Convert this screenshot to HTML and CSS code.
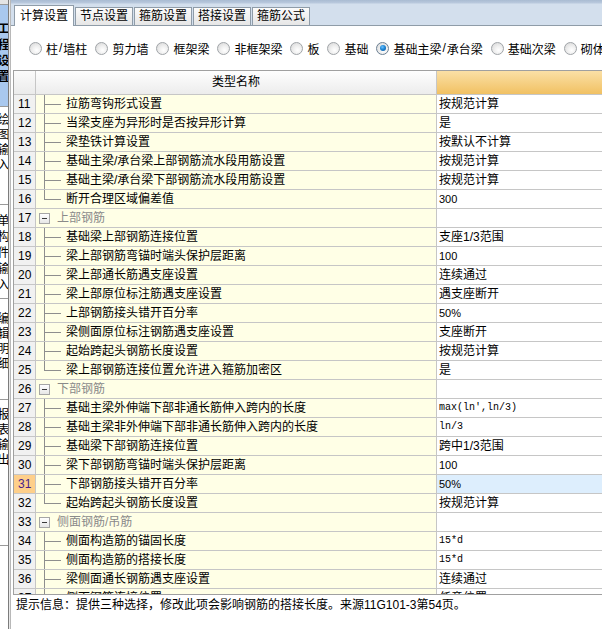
FILE: index.html
```html
<!DOCTYPE html>
<html lang="zh-CN">
<head>
<meta charset="utf-8">
<title>计算设置</title>
<link rel="stylesheet" href="styles.css">
</head>
<body>
<div class="app">
  <div class="sidebar">
    <div class="stab top"></div>
    <div class="stab active"><span>工程设置</span></div>
    <div class="stab t2"><span>绘图输入</span></div>
    <div class="stab t3"><span>单构件输入</span></div>
    <div class="stab t4"><span>编辑明细</span></div>
    <div class="stab t5"><span>报表输出</span></div>
    <div class="stab rest"></div>
  </div>
  <div class="gap"></div>
  <div class="main">
    <div class="tabbar">
      <div class="tab on">计算设置</div>
      <div class="tab">节点设置</div>
      <div class="tab">箍筋设置</div>
      <div class="tab">搭接设置</div>
      <div class="tab">箍筋公式</div>
    </div>
    <div class="radios">
      <label class="opt"><span class="radio"></span>柱<span class="sl">/</span>墙柱</label>
      <label class="opt"><span class="radio"></span>剪力墙</label>
      <label class="opt"><span class="radio"></span>框架梁</label>
      <label class="opt"><span class="radio"></span>非框架梁</label>
      <label class="opt"><span class="radio"></span>板</label>
      <label class="opt"><span class="radio"></span>基础</label>
      <label class="opt"><span class="radio checked"></span>基础主梁<span class="sl">/</span>承台梁</label>
      <label class="opt"><span class="radio"></span>基础次梁</label>
      <label class="opt"><span class="radio"></span>砌体结构</label>
    </div>
    <div class="grid">
      <div class="row hdr"><div class="num"></div><div class="name">类型名称</div><div class="val"></div></div>
      <div class="row"><div class="num">11</div><div class="name"><span class="tree"></span>拉筋弯钩形式设置</div><div class="val">按规范计算</div></div>
      <div class="row"><div class="num">12</div><div class="name"><span class="tree"></span>当梁支座为异形时是否按异形计算</div><div class="val">是</div></div>
      <div class="row"><div class="num">13</div><div class="name"><span class="tree"></span>梁垫铁计算设置</div><div class="val">按默认不计算</div></div>
      <div class="row"><div class="num">14</div><div class="name"><span class="tree"></span>基础主梁/承台梁上部钢筋流水段用筋设置</div><div class="val">按规范计算</div></div>
      <div class="row"><div class="num">15</div><div class="name"><span class="tree"></span>基础主梁/承台梁下部钢筋流水段用筋设置</div><div class="val">按规范计算</div></div>
      <div class="row"><div class="num">16</div><div class="name"><span class="tree last"></span>断开合理区域偏差值</div><div class="val n">300</div></div>
      <div class="row group"><div class="num">17</div><div class="name"><span class="box"></span>上部钢筋</div><div class="val"></div></div>
      <div class="row"><div class="num">18</div><div class="name"><span class="tree"></span>基础梁上部钢筋连接位置</div><div class="val">支座1/3范围</div></div>
      <div class="row"><div class="num">19</div><div class="name"><span class="tree"></span>梁上部钢筋弯锚时端头保护层距离</div><div class="val n">100</div></div>
      <div class="row"><div class="num">20</div><div class="name"><span class="tree"></span>梁上部通长筋遇支座设置</div><div class="val">连续通过</div></div>
      <div class="row"><div class="num">21</div><div class="name"><span class="tree"></span>梁上部原位标注筋遇支座设置</div><div class="val">遇支座断开</div></div>
      <div class="row"><div class="num">22</div><div class="name"><span class="tree"></span>上部钢筋接头错开百分率</div><div class="val n">50%</div></div>
      <div class="row"><div class="num">23</div><div class="name"><span class="tree"></span>梁侧面原位标注钢筋遇支座设置</div><div class="val">支座断开</div></div>
      <div class="row"><div class="num">24</div><div class="name"><span class="tree"></span>起始跨起头钢筋长度设置</div><div class="val">按规范计算</div></div>
      <div class="row"><div class="num">25</div><div class="name"><span class="tree last"></span>梁上部钢筋连接位置允许进入箍筋加密区</div><div class="val">是</div></div>
      <div class="row group"><div class="num">26</div><div class="name"><span class="box"></span>下部钢筋</div><div class="val"></div></div>
      <div class="row"><div class="num">27</div><div class="name"><span class="tree"></span>基础主梁外伸端下部非通长筋伸入跨内的长度</div><div class="val m">max(ln',ln/3)</div></div>
      <div class="row"><div class="num">28</div><div class="name"><span class="tree"></span>基础主梁非外伸端下部非通长筋伸入跨内的长度</div><div class="val m">ln/3</div></div>
      <div class="row"><div class="num">29</div><div class="name"><span class="tree"></span>基础梁下部钢筋连接位置</div><div class="val">跨中1/3范围</div></div>
      <div class="row"><div class="num">30</div><div class="name"><span class="tree"></span>梁下部钢筋弯锚时端头保护层距离</div><div class="val n">100</div></div>
      <div class="row sel"><div class="num">31</div><div class="name"><span class="tree"></span>下部钢筋接头错开百分率</div><div class="val n">50%</div></div>
      <div class="row"><div class="num">32</div><div class="name"><span class="tree last"></span>起始跨起头钢筋长度设置</div><div class="val">按规范计算</div></div>
      <div class="row group"><div class="num">33</div><div class="name"><span class="box"></span>侧面钢筋/吊筋</div><div class="val"></div></div>
      <div class="row"><div class="num">34</div><div class="name"><span class="tree"></span>侧面构造筋的锚固长度</div><div class="val m">15*d</div></div>
      <div class="row"><div class="num">35</div><div class="name"><span class="tree"></span>侧面构造筋的搭接长度</div><div class="val m">15*d</div></div>
      <div class="row"><div class="num">36</div><div class="name"><span class="tree"></span>梁侧面通长钢筋遇支座设置</div><div class="val">连续通过</div></div>
      <div class="row"><div class="num">37</div><div class="name"><span class="tree"></span>侧面钢筋连接位置</div><div class="val">任意位置</div></div>
    </div>
    <div class="status">提示信息：提供三种选择，修改此项会影响钢筋的搭接长度。来源11G101-3第54页。</div>
  </div>
</div>
</body>
</html>
```
FILE: styles.css
```css
html, body {
  margin: 0;
  padding: 0;
  background: #ffffff;
}
body {
  width: 602px;
  height: 629px;
  overflow: hidden;
  font-family: "Liberation Sans", "Noto Sans CJK SC", sans-serif;
  font-size: 12px;
  color: #000;
}
.app {
  display: flex;
  height: 629px;
}

/* left vertical tabs */
.sidebar {
  width: 8px;
  border-right: 1px solid #7c7c7c;
  display: flex;
  flex-direction: column;
  overflow: hidden;
  background: #f4f4f4;
}
.stab {
  flex: none;
  overflow: hidden;
  border-top: 1px solid #9a9a9a;
  background: #ffffff;
}
.stab span {
  display: block;
  writing-mode: vertical-rl;
  letter-spacing: 3px;
  margin-left: -5px;
  width: 13px;
  line-height: 13px;
}
.stab.top { height: 4px; border-top: none; background: #e4e4e4; }
.stab.active { height: 102px; background: #a9c8ee; padding-top: 17px; box-sizing: border-box; font-weight: bold; }
.stab.active span { letter-spacing: 4px; }
.stab.t2 { height: 98px; padding-top: 6px; box-sizing: border-box; }
.stab.t3 { height: 94px; padding-top: 9px; box-sizing: border-box; }
.stab.t3 span { letter-spacing: 4px; }
.stab.t4 { height: 101px; padding-top: 13px; box-sizing: border-box; }
.stab.t5 { height: 146px; padding-top: 8px; box-sizing: border-box; }
.stab.rest { flex: 1; }

.gap {
  width: 1px;
  background: #e8e8e8;
}
.main {
  flex: 1;
  min-width: 0;
  border-left: 1px solid #b8b8b8;
  display: flex;
  flex-direction: column;
}

/* top tab strip */
.tabbar {
  height: 25px;
  border-bottom: 1px solid #8f9ca8;
  background: linear-gradient(#a9bbd2 0, #b9c9dd 3px, #d3dfed 4px, #d3dfed 100%);
  display: flex;
  align-items: flex-end;
  gap: 1px;
  padding-left: 3px;
  white-space: nowrap;
}
.tab {
  height: 17px;
  line-height: 17px;
  padding: 0 4px;
  border: 1px solid #8f9ca8;
  border-bottom: none;
  background: linear-gradient(#fbfbfb, #e6e6e6);
}
.tab.on {
  height: 20px;
  line-height: 20px;
  padding: 0 5px;
  margin-bottom: -1px;
  background: #ffffff;
}

/* radio row */
.radios {
  height: 44px;
  display: flex;
  align-items: center;
  padding-left: 18px;
  gap: 8px;
  white-space: nowrap;
  overflow: hidden;
}
.opt {
  display: flex;
  align-items: center;
  flex: none;
}
.radio {
  width: 11px;
  height: 11px;
  border: 1px solid #a0a4a8;
  border-radius: 50%;
  background: radial-gradient(circle at 60% 65%, #ffffff 0, #f0f0f0 40%, #d4d4d4 100%);
  margin-right: 4px;
  display: flex;
  align-items: center;
  justify-content: center;
}
.radio.checked {
  border-color: #6b7f93;
}
.radio.checked::after {
  content: "";
  width: 6px;
  height: 6px;
  border-radius: 50%;
  background: radial-gradient(circle at 40% 35%, #6ec1ff 0, #1e86d4 45%, #0b4f92 100%);
}
.sl { padding: 0 1px; }

/* property grid */
.grid {
  margin-left: 2px;
  height: 525px;
  box-sizing: border-box;
  border: 1px solid #a0a0a0;
  border-right: none;
  overflow: hidden;
  flex: none;
}
.row {
  display: flex;
  height: 19px;
}
.row > div {
  height: 18px;
  line-height: 18px;
  border-bottom: 1px solid #c6c6c6;
  white-space: nowrap;
  overflow: hidden;
}
.num {
  width: 17px;
  padding-left: 4px;
  border-right: 1px solid #c6c6c6;
  background: #f1f1f1;
  font-size: 12px;
}
.name {
  width: 400px;
  border-right: 1px solid #c6c6c6;
  background: #ffffe6;
  display: flex;
  align-items: stretch;
}
.val {
  flex: 1;
  padding-left: 2px;
  background: #ffffff;
}
.val.n { font-size: 11px; }
.val.m { font-family: "Liberation Mono", monospace; font-size: 10px; }

.row.hdr { height: 24px; }
.row.hdr > div { height: 23px; line-height: 23px; }
.row.hdr .num { background: linear-gradient(#fbfbfb, #ebebeb); }
.row.hdr .name {
  background: linear-gradient(#fefefe, #ececec);
  justify-content: center;
}
.row.hdr .val { background: linear-gradient(#fbe0a6, #f1c163); }

.tree {
  width: 17px;
  margin-left: 8px;
  margin-right: 5px;
  flex: none;
  background:
    linear-gradient(#8e8e8e, #8e8e8e) no-repeat 0 0 / 1px 100%,
    linear-gradient(#8e8e8e, #8e8e8e) no-repeat 0 9px / 100% 1px;
}
.tree.last {
  background:
    linear-gradient(#8e8e8e, #8e8e8e) no-repeat 0 0 / 1px 10px,
    linear-gradient(#8e8e8e, #8e8e8e) no-repeat 0 9px / 100% 1px;
}
.group .name { color: #8a8a8a; align-items: center; }
.box {
  width: 9px;
  height: 9px;
  margin-left: 3px;
  margin-right: 7px;
  border: 1px solid #a6a6a6;
  background: linear-gradient(#ffffff, #e6e6e6);
  display: flex;
  align-items: center;
  justify-content: center;
  flex: none;
}
.box::after {
  content: "";
  width: 5px;
  height: 1px;
  background: #3a3a3a;
}
.row.sel .num { background: #fecf8a; color: #4a1f8a; }
.row.sel .val { background: #ddeefd; }

.status {
  height: 20px;
  line-height: 20px;
  padding-left: 5px;
  white-space: nowrap;
  overflow: hidden;
}
```
